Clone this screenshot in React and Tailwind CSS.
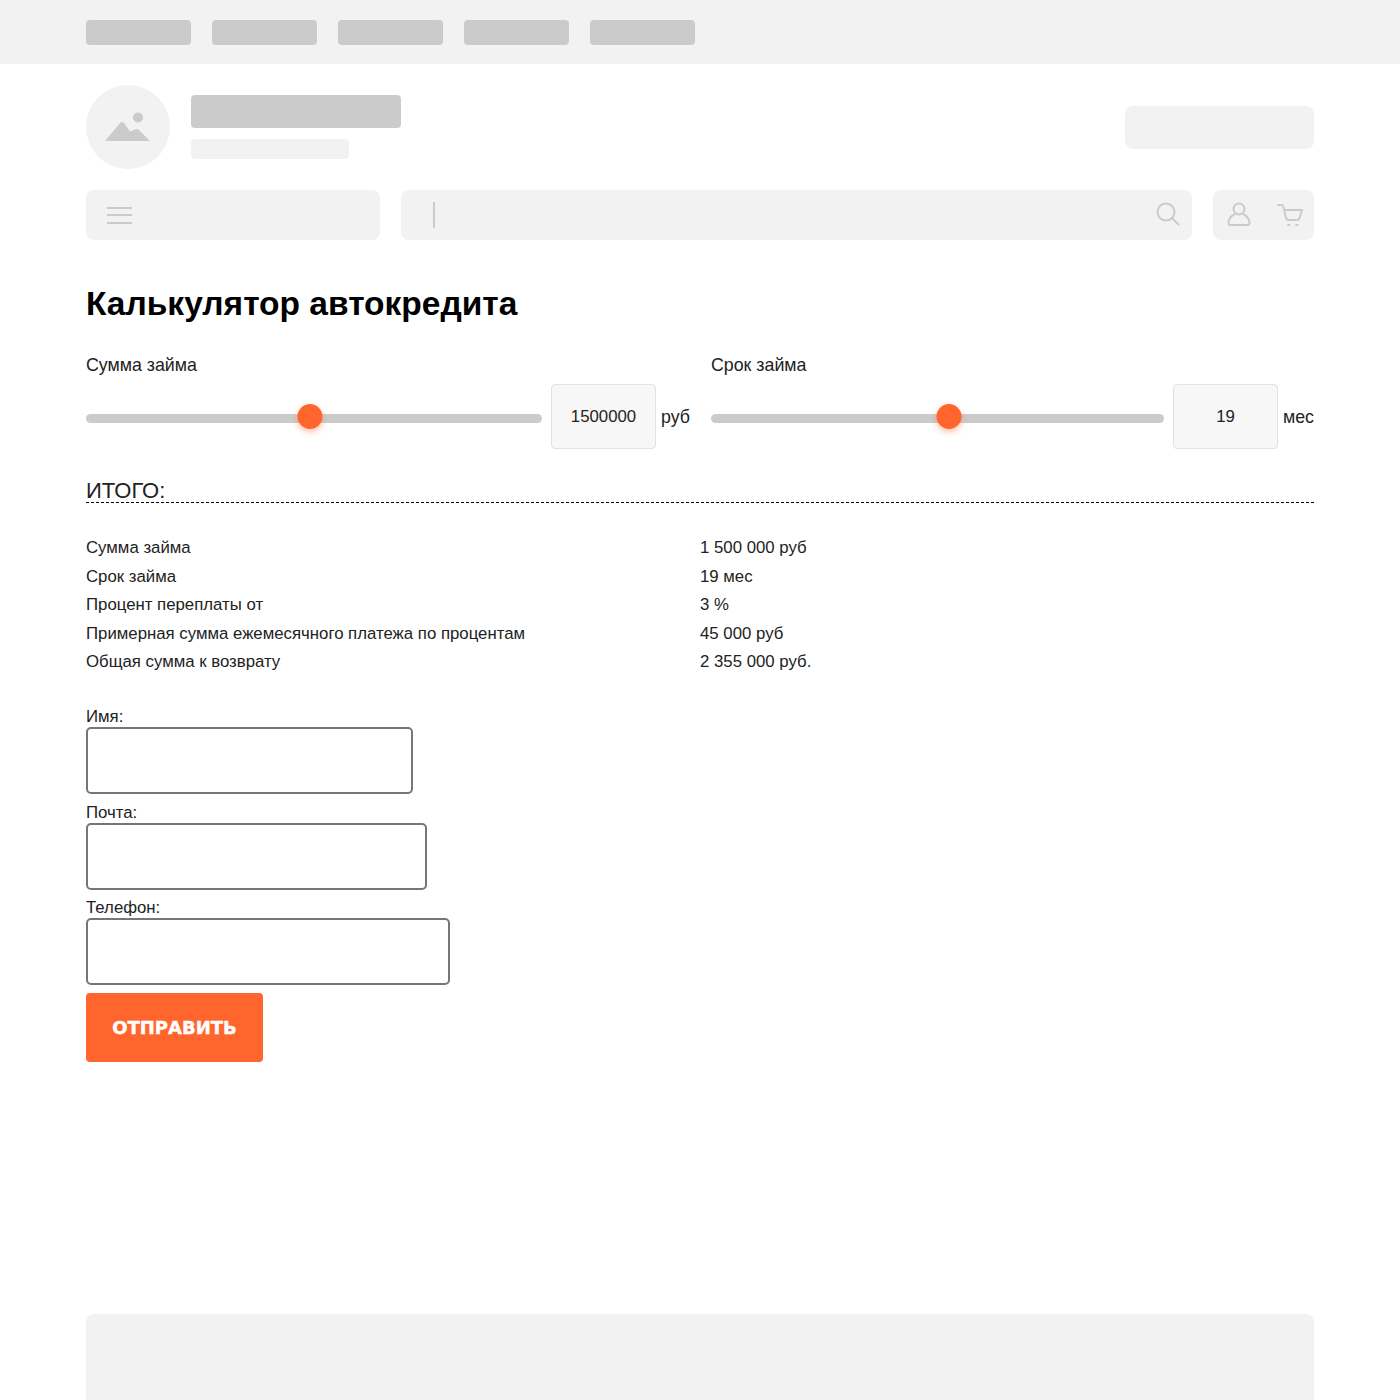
import React from "react";

const NAV = [0, 1, 2, 3, 4];

const RESULTS = [
  ["Сумма займа", "1 500 000 руб"],
  ["Срок займа", "19 мес"],
  ["Процент переплаты от", "3 %"],
  ["Примерная сумма ежемесячного платежа по процентам", "45 000 руб"],
  ["Общая сумма к возврату", "2 355 000 руб."],
];

function Slider({ label, value, unit, percent, trackWidth, unitGap, className }) {
  return (
    <div className={className}>
      <div className="h-[21px] text-[17.8px] leading-[21px] text-[#222]">{label}</div>
      <div className="mt-[8px] flex items-center">
        <div className={`relative h-[9px] mt-[3px] shrink-0 rounded-full bg-[#cbcbcb] ${trackWidth}`}>
          <div
            className="absolute top-[-10px] h-[25px] w-[25px] -translate-x-1/2 rounded-full bg-[#ff652d] shadow-[0_3px_6px_rgba(255,101,45,0.4)]"
            style={{ left: percent + "%" }}
          />
        </div>
        <div className="ml-[9px] flex h-[65px] w-[105px] shrink-0 items-center justify-center rounded-[4px] border border-[#e2e2e2] bg-[#f7f7f7] pt-px text-[16.8px] text-[#222]">
          {value}
        </div>
        <span className={`shrink-0 pt-px text-[17.8px] text-[#222] ${unitGap}`}>{unit}</span>
      </div>
    </div>
  );
}

function Field({ label, width }) {
  return (
    <div>
      <div className="h-[20px] text-[16.8px] leading-[20px] text-[#222]">{label}</div>
      <div className={`h-[67px] rounded-[5px] border-2 border-[#767676] bg-white ${width}`} />
    </div>
  );
}

export default function App() {
  return (
    <div className="min-h-[1400px] overflow-hidden bg-white font-['Liberation_Sans',Arial,sans-serif]">
      {/* top bar */}
      <div className="h-16 bg-[#f2f2f2]">
        <div className="flex gap-[21px] px-[86px] pt-5">
          {NAV.map((n) => (
            <div key={n} className="h-[25px] w-[105px] rounded-[4px] bg-[#cbcbcb]" />
          ))}
        </div>
      </div>

      <div className="px-[86px]">
        {/* logo row */}
        <div className="mt-[21px] flex items-center">
          <div className="flex h-[84px] w-[84px] items-center justify-center rounded-full bg-[#f2f2f2]">
            <svg width="46" height="32" viewBox="0 0 46 32" fill="#cbcbcb">
              <circle cx="33" cy="6.500" r="5" />
              <path d="M0 30 L15 12 Q17 10 19 12 L25 20.500 L30 18.500 Q32 17.500 34 19 L45 30 Z" />
            </svg>
          </div>
          <div className="ml-[21px]">
            <div className="h-[33px] w-[210px] rounded-[4px] bg-[#cbcbcb]" />
            <div className="mt-[11px] h-[20px] w-[158px] rounded-[4px] bg-[#f2f2f2]" />
          </div>
          <div className="ml-auto h-[43px] w-[189px] rounded-[8px] bg-[#f2f2f2]" />
        </div>

        {/* search row */}
        <div className="mt-[21px] flex gap-[21px]">
          <div className="flex h-[50px] w-[294px] items-center rounded-[8px] bg-[#f2f2f2] pl-[21px]">
            <div className="flex w-[25px] flex-col gap-[5.500px]">
              <div className="h-[2px] bg-[#cbcbcb]" />
              <div className="h-[2px] bg-[#cbcbcb]" />
              <div className="h-[2px] bg-[#cbcbcb]" />
            </div>
          </div>
          <div className="flex h-[50px] flex-1 items-center rounded-[8px] bg-[#f2f2f2] pl-8 pr-3">
            <div className="h-[26px] w-[2px] bg-[#cbcbcb]" />
            <svg className="ml-auto mb-[3px]" width="25" height="25" viewBox="0 0 25 25" fill="none" stroke="#cbcbcb" strokeWidth="2" strokeLinecap="round">
              <circle cx="11" cy="11" r="8.500" />
              <path d="M17.500 17.500 L23.500 23.500" />
            </svg>
          </div>
          <div className="flex h-[50px] w-[101px] items-center rounded-[8px] bg-[#f2f2f2] pl-[14px]">
            <svg className="mb-[2px]" width="24" height="24" viewBox="0 0 24 24" fill="none" stroke="#cbcbcb" strokeWidth="2">
              <circle cx="12" cy="7" r="5.500" />
              <path d="M8 12 C4 14 1.500 17 1.500 21 Q1.500 23 3.500 23 H20.500 Q22.500 23 22.500 21 C22.500 17 20 14 16 12" />
            </svg>
            <svg className="ml-[26px]" width="26" height="24" viewBox="0 0 26 24" fill="none" stroke="#cbcbcb" strokeWidth="2" strokeLinecap="round" strokeLinejoin="round">
              <path d="M1 2 H4.500 Q6 2 6.500 4 L9 15 Q9.500 17 11.500 17 H20 Q22 17 22.500 15 L25 7 H7" />
              <path d="M11 22 H12.500 M19 22 H20.500" />
            </svg>
          </div>
        </div>

        <h1 className="mt-[45px] h-[38px] text-[33.5px] font-bold leading-[38px] text-black">Калькулятор автокредита</h1>

        {/* sliders */}
        <div className="mt-[32px] flex">
          <Slider label="Сумма займа" value="1500000" unit="руб" percent={49.200} trackWidth="w-[456px]" unitGap="ml-[5px]" className="w-[625px] shrink-0" />
          <Slider label="Срок займа" value="19" unit="мес" percent={52.500} trackWidth="w-[453px]" unitGap="ml-[5px]" className="min-w-0 flex-1" />
        </div>

        {/* totals */}
        <div className="mt-[25px] h-[29px] border-b border-dashed border-black text-[22px] leading-[34px] text-[#222]">ИТОГО:</div>
        <div className="mt-[30.800px] flex flex-col">
          {RESULTS.map(([name, val]) => (
            <div key={name} className="flex h-[28.500px] items-center text-[16.8px] text-[#222]">
              <div className="w-[614px]">{name}</div>
              <div>{val}</div>
            </div>
          ))}
        </div>

        {/* form */}
        <div className="mt-[31.200px] flex flex-col gap-[8.500px]">
          <Field label="Имя:" width="w-[327px]" />
          <Field label="Почта:" width="w-[341px]" />
          <Field label="Телефон:" width="w-[364px]" />
        </div>
        <button className="mt-[8px] flex h-[69px] w-[177px] items-center justify-center rounded-[4px] bg-[#ff652d] font-['DejaVu_Sans',sans-serif] text-[18px] font-bold text-white [-webkit-text-stroke:0.4px_white]">
          ОТПРАВИТЬ
        </button>

        <div className="mt-[252px] h-[120px] rounded-[8px] bg-[#f2f2f2]" />
      </div>
    </div>
  );
}
